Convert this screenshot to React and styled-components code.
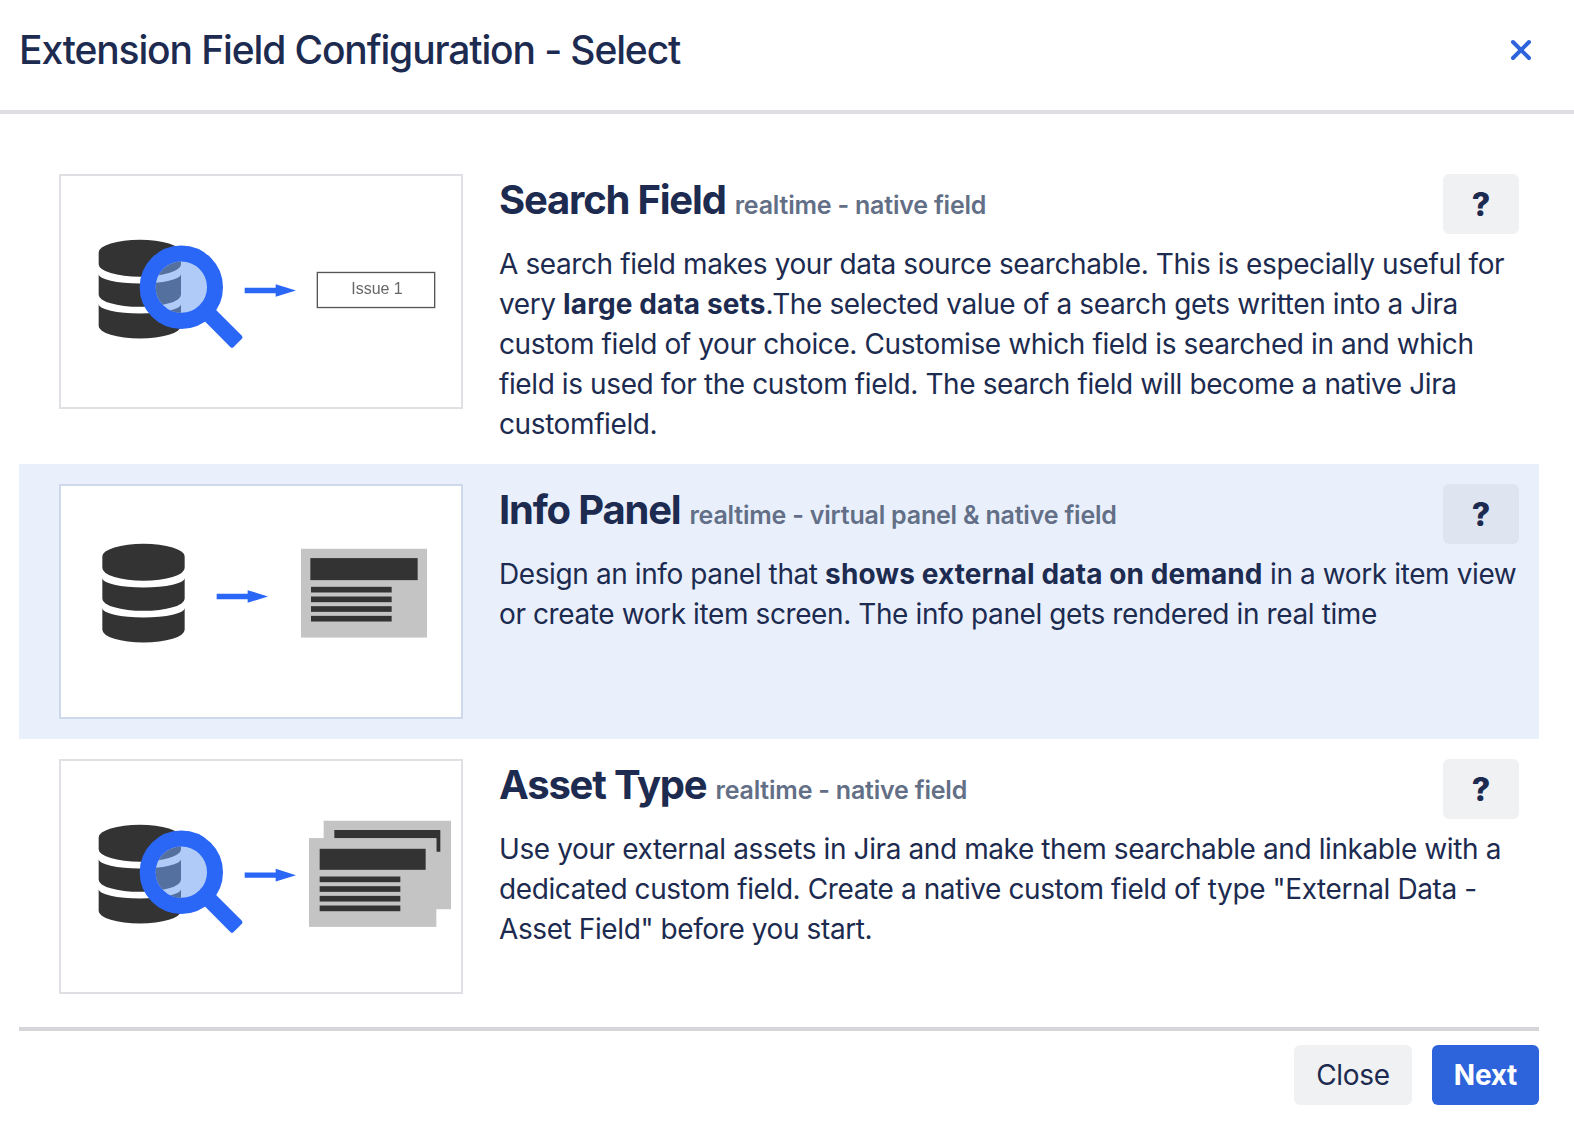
import { useId } from 'react';
import styled, { createGlobalStyle } from 'styled-components';
import { X } from 'lucide-react';

const GlobalStyle = createGlobalStyle`
  * {
    box-sizing: border-box;
  }

  body {
    margin: 0;
    background: #fff;
    color: #1c2b4f;
    font-family: Inter, "Liberation Sans", sans-serif;
  }
`;

const Dialog = styled.div`
  width: 1574px;
  height: 1130px;
  display: flex;
  flex-direction: column;
  overflow: hidden;
`;

const Header = styled.header`
  height: 114px;
  flex: none;
  display: flex;
  align-items: flex-start;
  justify-content: space-between;
  padding: 24px 40px 0 19px;
  border-bottom: 4px solid #dfdfe4;
`;

const DialogTitle = styled.h1`
  margin: 0;
  font-size: 39px;
  line-height: 52px;
  font-weight: 500;
  letter-spacing: -1.13px;
  color: #1c2b4f;
`;

const CloseIcon = styled.button`
  width: 32px;
  height: 32px;
  margin-top: 10px;
  margin-right: -3px;
  padding: 0;
  border: none;
  background: none;
  color: #2d64dc;
  cursor: pointer;
`;

const List = styled.div`
  padding: 40px 35px 0 19px;
`;

const Row = styled.section`
  display: flex;
  gap: 36px;
  padding: 20px 20px 20px 40px;
  background: ${props => (props.$active ? '#e9f0fc' : 'transparent')};
`;

const Thumb = styled.div`
  width: 404px;
  height: 235px;
  flex: none;
  background: #fff;
  border: 2px solid ${props => (props.$active ? '#cdd8ea' : '#dfdfe4')};
`;

const ThumbArt = styled.svg`
  display: block;
  width: 100%;
  height: 100%;
  filter: blur(0.4px);
`;

const Content = styled.div`
  flex: 1;
  min-width: 0;
`;

const TitleRow = styled.div`
  height: 60px;
  margin-bottom: 10px;
  display: flex;
  align-items: flex-start;
  justify-content: space-between;
`;

const TitleGroup = styled.div`
  display: flex;
  align-items: baseline;
  gap: 9px;
`;

const Title = styled.h2`
  margin: 0;
  font-size: 40px;
  line-height: 52px;
  font-weight: 700;
  letter-spacing: -1.2px;
  color: #1c2b4f;
`;

const Tag = styled.span`
  font-size: 25px;
  font-weight: 600;
  letter-spacing: -0.2px;
  color: #626f86;
`;

const HelpButton = styled.button`
  width: 76px;
  height: 60px;
  flex: none;
  border: none;
  border-radius: 6px;
  background: ${props => (props.$active ? '#dfe5f0' : '#f0f1f3')};
  color: #1c2b4f;
  font-family: inherit;
  font-size: 32px;
  font-weight: 800;
  cursor: pointer;
`;

const Body = styled.p`
  margin: 0;
  font-size: 28px;
  line-height: 40px;
  letter-spacing: -0.4px;
  color: #1c2b4f;

  b {
    font-weight: 700;
    letter-spacing: 0.1px;
  }
`;

const Footer = styled.footer`
  margin: 13px 35px 0 19px;
  padding-top: 14px;
  display: flex;
  justify-content: flex-end;
  gap: 20px;
  border-top: 4px solid #d6d5d9;
`;

const FooterButton = styled.button`
  height: 60px;
  padding: 0 22px;
  border: none;
  border-radius: 6px;
  background: ${props => (props.$primary ? '#2d64dc' : '#f0f1f3')};
  color: ${props => (props.$primary ? '#fff' : '#1c2b4f')};
  font-family: inherit;
  font-size: 28px;
  font-weight: ${props => (props.$primary ? 700 : 400)};
  letter-spacing: -0.3px;
  cursor: pointer;
`;

// all the drawings share the reference crop's coordinates: 3 units = 1px
const VIEW_BOX = '34 34 1200 692';

const Database = ({ x = 158, y = 207, fill = '#333' }) => {
  const r = x + 247;
  const rx = 123.5;
  return (
    <g fill={fill}>
      <path d={`M${x} ${y + 38} A${rx} 38 0 0 1 ${r} ${y + 38} V${y + 73} A${rx} 38 0 0 1 ${x} ${y + 73} Z`} />
      <path d={`M${x} ${y + 103} A${rx} 28 0 0 0 ${r} ${y + 103} V${y + 165} A${rx} 36 0 0 1 ${x} ${y + 165} Z`} />
      <path d={`M${x} ${y + 193} A${rx} 28 0 0 0 ${r} ${y + 193} V${y + 258} A${rx} 38 0 0 1 ${x} ${y + 258} Z`} />
    </g>
  );
};

const SearchDatabase = () => {
  const clipId = useId();
  return (
    <g>
      <clipPath id={clipId}>
        <circle cx="395" cy="367" r="77" />
      </clipPath>
      <Database x={147} y={225} />
      <rect x="-24" y="0" width="48" height="130" rx="6" fill="#2b67f6" transform="translate(472 442) rotate(-45)" />
      <circle cx="395" cy="367" r="101" fill="#b0cbf8" stroke="#2b67f6" strokeWidth="48" />
      <g clipPath={`url(#${clipId})`}>
        <Database x={147} y={225} fill="#54709f" />
      </g>
    </g>
  );
};

const Arrow = ({ x, y }) => (
  <path
    fill="#2b67f6"
    d={`M${x} ${y - 8} H${x + 93} V${y - 19} L${x + 154} ${y} L${x + 93} ${y + 19} V${y + 8} H${x} Z`}
  />
);

const PanelCard = ({ x, y }) => (
  <g>
    <rect x={x} y={y} width="378" height="266" fill="#c4c4c4" />
    <rect x={x + 28} y={y + 28} width="322" height="66" fill="#333" />
    {[0, 29, 58, 87].map(offset => (
      <rect key={offset} x={x + 30} y={y + 114 + offset} width="242" height="17" fill="#333" />
    ))}
  </g>
);

const SearchArt = () => (
  <ThumbArt viewBox={VIEW_BOX} preserveAspectRatio="none">
    <SearchDatabase />
    <Arrow x={585} y={377} />
    <rect x="803" y="323" width="352" height="105" fill="#fff" stroke="#555" strokeWidth="4" />
    <text x="982" y="388" textAnchor="middle" fontFamily="Liberation Sans, sans-serif" fontSize="48" fill="#666">Issue 1</text>
  </ThumbArt>
);

const PanelArt = () => (
  <ThumbArt viewBox={VIEW_BOX} preserveAspectRatio="none">
    <Database />
    <Arrow x={501} y={365} />
    <PanelCard x={754} y={222} />
  </ThumbArt>
);

const AssetArt = () => (
  <ThumbArt viewBox={VIEW_BOX} preserveAspectRatio="none">
    <SearchDatabase />
    <Arrow x={585} y={376} />
    <rect x="822" y="213" width="382" height="265" fill="#c4c4c4" />
    <path d="M854 241 H1172 V306 H1160 V266 H854 Z" fill="#333" />
    <rect x="778" y="265" width="382" height="266" fill="#c4c4c4" />
    <rect x="810" y="297" width="318" height="63" fill="#333" />
    {[380, 409, 438, 467].map(top => (
      <rect key={top} x="810" y={top} width="242" height="17" fill="#333" />
    ))}
  </ThumbArt>
);

const extensions = [
  {
    title: 'Search Field',
    tag: 'realtime - native field',
    art: <SearchArt />,
    body: (
      <>
        A search field makes your data source searchable. This is especially useful for very <b>large data sets</b>.The
        selected value of a search gets written into a Jira custom field of your choice. Customise which field is
        searched in and which field is used for the custom field. The search field will become a native Jira customfield.
      </>
    ),
  },
  {
    title: 'Info Panel',
    tag: 'realtime - virtual panel & native field',
    art: <PanelArt />,
    active: true,
    body: (
      <>
        Design an info panel that <b>shows external data on demand</b> in a work item view or create work item screen.
        The info panel gets rendered in real time
      </>
    ),
  },
  {
    title: 'Asset Type',
    tag: 'realtime - native field',
    art: <AssetArt />,
    body: (
      <>
        Use your external assets in Jira and make them searchable and linkable with a dedicated custom field. Create a
        native custom field of type "External Data - Asset Field" before you start.
      </>
    ),
  },
];

export default function App() {
  return (
    <>
      <GlobalStyle />
      <Dialog>
        <Header>
          <DialogTitle>Extension Field Configuration - Select</DialogTitle>
          <CloseIcon aria-label="Close">
            <X size={32} strokeWidth={3} />
          </CloseIcon>
        </Header>
        <List>
          {extensions.map(item => (
            <Row key={item.title} $active={item.active}>
              <Thumb $active={item.active}>{item.art}</Thumb>
              <Content>
                <TitleRow>
                  <TitleGroup>
                    <Title>{item.title}</Title>
                    <Tag>{item.tag}</Tag>
                  </TitleGroup>
                  <HelpButton $active={item.active}>?</HelpButton>
                </TitleRow>
                <Body>{item.body}</Body>
              </Content>
            </Row>
          ))}
        </List>
        <Footer>
          <FooterButton>Close</FooterButton>
          <FooterButton $primary>Next</FooterButton>
        </Footer>
      </Dialog>
    </>
  );
}
